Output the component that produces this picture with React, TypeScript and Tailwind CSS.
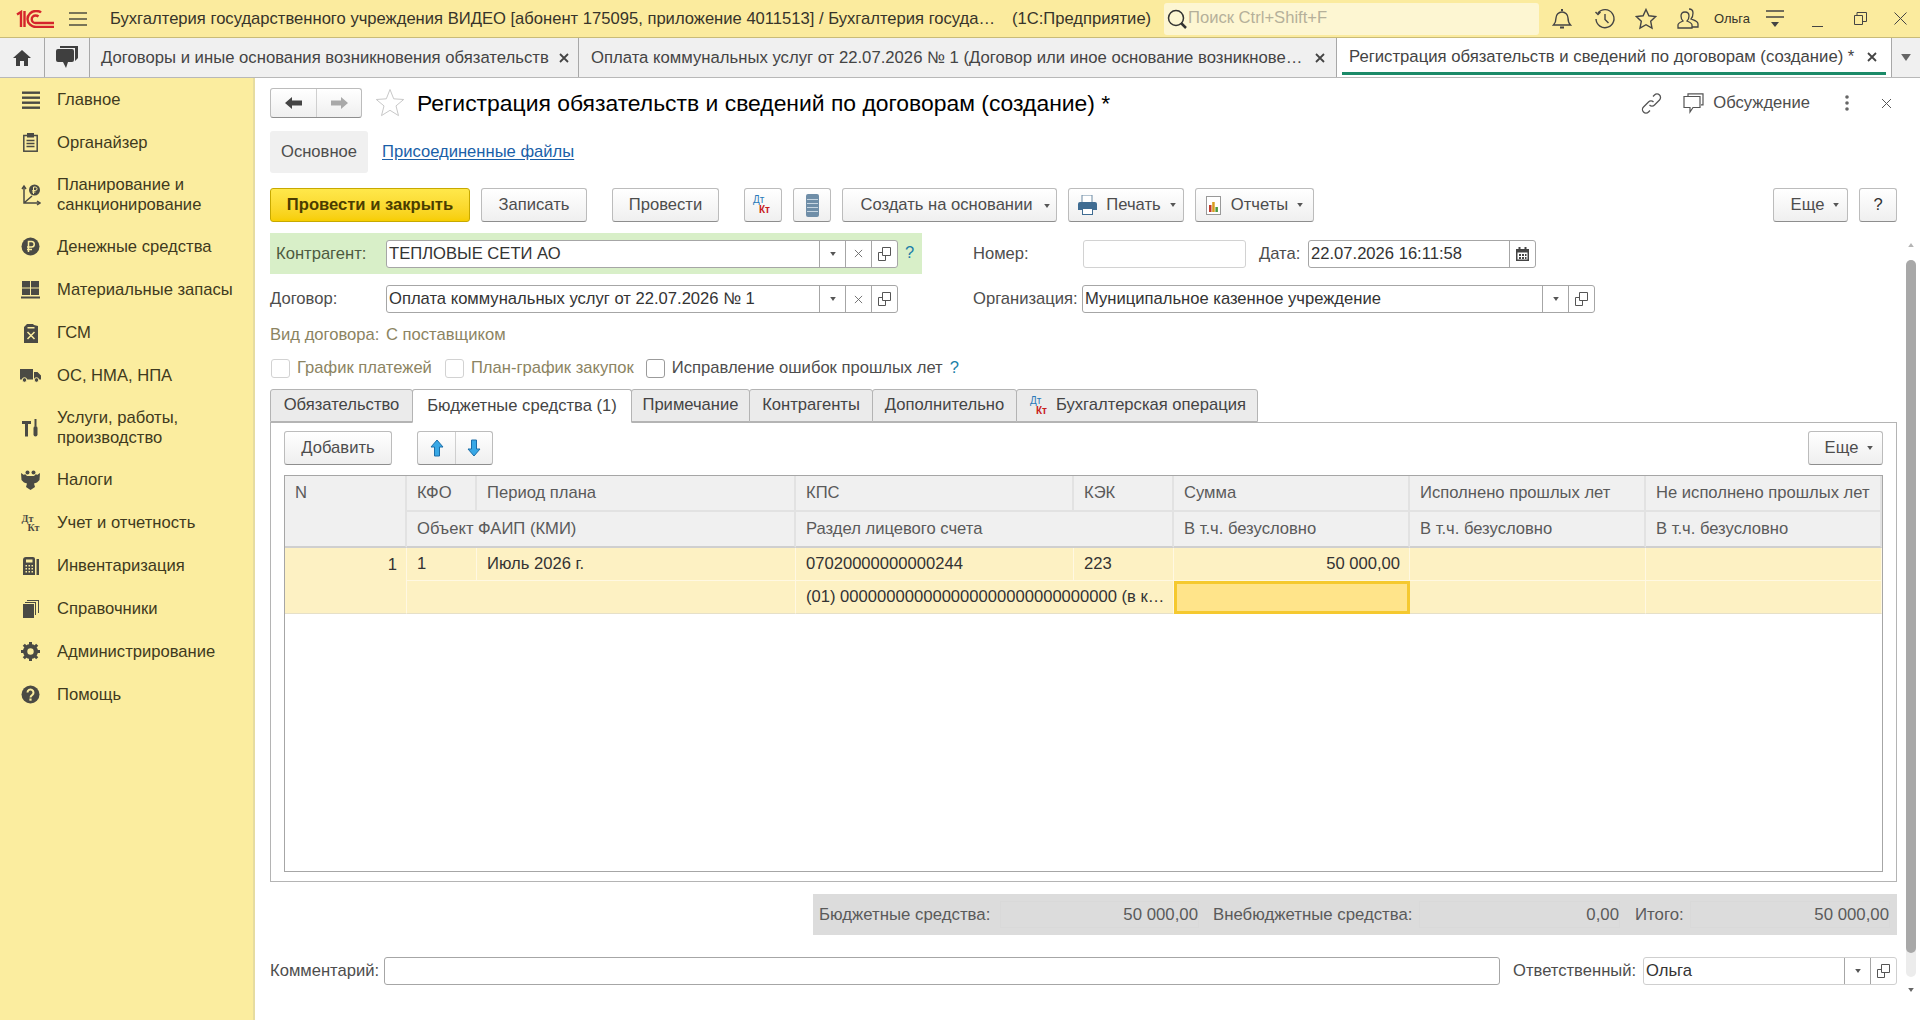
import type { ReactNode } from 'react';

const Caret = ({ className = 'text-[#555]' }: { className?: string }) => (
  <svg width="6" height="4" viewBox="0 0 7 5" className={className}>
    <path d="M0 0h7L3.5 5z" fill="currentColor" />
  </svg>
);

const Cross = ({ size = 10, width = 1.8, color = '#444' }: { size?: number; width?: number; color?: string }) => (
  <svg width={size} height={size} viewBox="0 0 10 10" stroke={color} strokeWidth={width}>
    <path d="M1 1l8 8M9 1l-8 8" />
  </svg>
);

const DtKt = () => (
  <span className="relative block w-[24px] h-[24px] font-bold leading-none">
    <span className="absolute left-[2px] top-[2px] text-[10px] font-normal text-[#2a7ab8]">Дт</span>
    <span className="absolute left-[8px] top-[12px] text-[10px] text-[#c8201a]">Кт</span>
  </span>
);

const OpenIcon = () => (
  <svg width="13" height="14" viewBox="0 0 13 14" fill="none" stroke="#555" strokeWidth="1">
    <path d="M4.5.5h8v8h-8z" />
    <path d="M4.5 5.500h-4v8h7v-5" />
  </svg>
);

const Btn = ({ children, className = '' }: { children: ReactNode; className?: string }) => (
  <div
    className={`h-[34px] shrink-0 flex items-center justify-center rounded-[3px] border border-[#bcbcbc] border-b-[#8e8e8e] bg-gradient-to-b from-white to-[#efefef] text-[#4d4d4d] text-[16.6px] ${className}`}
  >
    {children}
  </div>
);

const MenuItem = ({ icon, label, tall }: { icon: ReactNode; label: ReactNode; tall?: boolean }) => (
  <div className={`flex items-center ${tall ? 'h-[61px]' : 'h-[43px]'}`}>
    <div className="w-[57px] flex justify-center pl-[4px] shrink-0">{icon}</div>
    <div className="text-[16.6px] leading-[20px] text-[#3f3a20] whitespace-nowrap">{label}</div>
  </div>
);

const ic = '#4a4a44';

const menu: { icon: ReactNode; label: ReactNode; tall?: boolean }[] = [
  {
    label: 'Главное',
    icon: (
      <svg width="18" height="18" viewBox="0 0 18 18" fill={ic}>
        <rect y="0.5" width="18" height="2.4" />
        <rect y="5.500" width="18" height="2.4" />
        <rect y="10.500" width="18" height="2.4" />
        <rect y="15.500" width="18" height="2.4" />
      </svg>
    ),
  },
  {
    label: 'Органайзер',
    icon: (
      <svg width="15" height="19" viewBox="0 0 15 19" fill="none" stroke={ic}>
        <rect x="0.8" y="2.500" width="13.4" height="15.700" strokeWidth="1.500" />
        <rect x="4.500" y="0.5" width="6" height="3.500" fill={ic} />
        <path d="M3.500 7.500h8M3.500 10.500h8M3.500 13.500h8" strokeWidth="1.300" />
      </svg>
    ),
  },
  {
    label: (
      <>
        Планирование и
        <br />
        санкционирование
      </>
    ),
    tall: true,
    icon: (
      <svg width="20" height="24" viewBox="0 0 20 24" fill="none" stroke={ic} strokeWidth="1.500">
        <path d="M3 3v17h15M3 20l8-7" />
        <path d="M1 6l2-3 2 3M16 18l3 2-3 2" />
        <circle cx="13.500" cy="7" r="5.500" fill={ic} stroke="none" />
        <path d="M12.500 11V4h1.800a1.700 1.700 0 0 1 0 3.500h-3M11 9h3.500" stroke="#fbed9f" strokeWidth="1" />
      </svg>
    ),
  },
  {
    label: 'Денежные средства',
    icon: (
      <svg width="19" height="19" viewBox="0 0 19 19">
        <circle cx="9.5" cy="9.5" r="9" fill={ic} />
        <path d="M7.5 15V4.500h3a2.700 2.700 0 0 1 0 5.500h-4.500M6 12.500h5" fill="none" stroke="#fbed9f" strokeWidth="1.500" />
      </svg>
    ),
  },
  {
    label: 'Материальные запасы',
    icon: (
      <svg width="19" height="18" viewBox="0 0 19 18" fill={ic}>
        <rect x="1" y="0" width="8" height="6.500" />
        <rect x="10" y="0" width="8" height="6.500" />
        <rect x="1" y="7.500" width="8" height="6.500" />
        <rect x="10" y="7.500" width="8" height="6.500" />
        <rect x="0" y="15.500" width="19" height="2" />
      </svg>
    ),
  },
  {
    label: 'ГСМ',
    icon: (
      <svg width="14" height="20" viewBox="0 0 14 20">
        <path d="M0 4l3-3h6l1 1 4 1v17H0z" fill={ic} />
        <path d="M3.500 9l7 7M10.500 9l-7 7" stroke="#fbed9f" strokeWidth="1.500" />
        <rect x="3.500" y="4" width="7" height="1.500" fill="#fbed9f" />
      </svg>
    ),
  },
  {
    label: 'ОС, НМА, НПА',
    icon: (
      <svg width="21" height="15" viewBox="0 0 21 15" fill={ic}>
        <path d="M0 1h13v10.500H0zM14 4h3.500L21 7.500v4h-7z" />
        <circle cx="4.500" cy="12" r="2.300" stroke="#fbed9f" />
        <circle cx="16.500" cy="12" r="2.300" stroke="#fbed9f" />
      </svg>
    ),
  },
  {
    label: (
      <>
        Услуги, работы,
        <br />
        производство
      </>
    ),
    tall: true,
    icon: (
      <svg width="17" height="18" viewBox="0 0 17 18" fill={ic}>
        <path d="M0 2h9v3H6v12.500H3V5H0z" />
        <rect x="12.500" y="0" width="2" height="7" />
        <rect x="11.500" y="7" width="4" height="10.500" rx="2" />
      </svg>
    ),
  },
  {
    label: 'Налоги',
    icon: (
      <svg width="19" height="20" viewBox="0 0 19 20" fill={ic}>
        <circle cx="6.500" cy="2.500" r="2" />
        <circle cx="12.500" cy="2.500" r="2" />
        <path d="M0 3l3 2 1-1 2 2h7l2-2 1 1 3-2-.5 7-2.500 2.500-3 1 1 3.500-4.500 3-4.500-3 1-3.500-3-1L.5 10z" />
      </svg>
    ),
  },
  {
    label: 'Учет и отчетность',
    icon: (
      <span className="relative block w-[18px] h-[18px] leading-none font-bold text-[10px] text-[#4a4a44] [font-family:'Liberation_Serif',serif]">
        <span className="absolute left-0 top-0">Дт</span>
        <span className="absolute left-[6px] top-[9px]">Кт</span>
      </span>
    ),
  },
  {
    label: 'Инвентаризация',
    icon: (
      <svg width="16" height="18" viewBox="0 0 16 18" fill={ic}>
        <path d="M0 3a3 3 0 0 1 3-3h7a2 2 0 0 1 2 2v16H0z" />
        <rect x="13.500" y="2" width="2.500" height="16" />
        <path d="M3 2.500h6.500v3H3z" fill="#fbed9f" />
        <path d="M2.500 8H4v1.500H2.500zM5.500 8H7v1.500H5.500zM8.500 8H10v1.500H8.500zM2.500 11H4v1.500H2.500zM5.500 11H7v1.500H5.500zM8.500 11H10v1.500H8.500zM2.500 14H4v1.500H2.500zM5.500 14H7v1.500H5.500zM8.500 14H10v1.500H8.500z" fill="#fbed9f" />
      </svg>
    ),
  },
  {
    label: 'Справочники',
    icon: (
      <svg width="16" height="18" viewBox="0 0 16 18" fill={ic}>
        <rect x="0" y="4" width="11" height="14" />
        <path d="M2 2h11v13h-1V3H2zM4 0h12v13h-1V1H4z" />
      </svg>
    ),
  },
  {
    label: 'Администрирование',
    icon: (
      <svg width="19" height="19" viewBox="0 0 19 19">
        <circle cx="9.5" cy="9.5" r="5.500" fill="none" stroke={ic} strokeWidth="4" />
        <path d="M9.5 0v19M0 9.5h19M2.800 2.800l13.400 13.400M16.200 2.800L2.800 16.200" stroke={ic} strokeWidth="3" />
        <circle cx="9.5" cy="9.5" r="3.200" fill="#fbed9f" />
      </svg>
    ),
  },
  {
    label: 'Помощь',
    icon: (
      <svg width="19" height="19" viewBox="0 0 19 19">
        <circle cx="9.5" cy="9.5" r="9" fill={ic} />
        <path d="M6.500 7.500a3 3 0 1 1 4.800 2.400c-1.200.9-1.800 1.300-1.800 2.600" fill="none" stroke="#fbed9f" strokeWidth="2" />
        <rect x="8.400" y="13.500" width="2.200" height="2.200" fill="#fbed9f" />
      </svg>
    ),
  },
];

const FieldBtn = ({ children }: { children: ReactNode }) => (
  <div className="w-[26px] h-full flex items-center justify-center border-l border-[#a6a6a6] shrink-0">{children}</div>
);

const Field = ({ value, className, clear, light }: { value?: string; className: string; clear?: boolean; light?: boolean }) => (
  <div
    className={`h-[28px] flex items-center rounded-[3px] border bg-white ${light ? 'border-[#cfcfcf]' : 'border-[#a6a6a6]'} ${className}`}
  >
    <div className="flex-1 pl-[2px] pt-[1px] text-[16.6px] text-[#333] whitespace-nowrap overflow-hidden">{value}</div>
    <FieldBtn>
      <Caret />
    </FieldBtn>
    {clear && (
      <FieldBtn>
        <Cross size={9} width={1} color="#666" />
      </FieldBtn>
    )}
    <FieldBtn>
      <OpenIcon />
    </FieldBtn>
  </div>
);

const Check = ({ label, muted }: { label: string; muted?: boolean }) => (
  <div className="flex items-center">
    <div className={`w-[19px] h-[19px] rounded-[3px] border bg-white ${muted ? 'border-[#d2d2d2]' : 'border-[#9b9b9b]'}`} />
    <span className={`ml-[7px] text-[16.6px] ${muted ? 'text-[#8c8462]' : 'text-[#4d4d4d]'}`}>{label}</span>
  </div>
);

const Tab = ({ children, w, active }: { children: ReactNode; w: string; active?: boolean }) => (
  <div
    className={`${w} flex items-center justify-center text-[16.6px] text-[#444] border border-[#b4b4b4] -ml-px first:ml-0 rounded-t-[3px] whitespace-nowrap ${
      active ? 'h-[34px] bg-white border-b-white -mb-px relative' : 'h-[33px] bg-[#ebebeb]'
    }`}
  >
    {children}
  </div>
);

const Th = ({ children, className = '' }: { children?: ReactNode; className?: string }) => (
  <div className={`bg-[#f0f0f0] flex items-center pl-[10px] pr-[8px] text-[16.6px] text-[#5a5a5a] whitespace-nowrap overflow-hidden border-r-2 border-b-2 border-[#e2e2e2] ${className}`}>
    {children}
  </div>
);

const Td = ({ children, className = '' }: { children?: ReactNode; className?: string }) => (
  <div className={`bg-[#fdf1c3] flex items-center pl-[10px] pr-[9px] pt-[1px] text-[16.6px] text-[#333] whitespace-nowrap overflow-hidden border-r border-b border-[#fff8e2] ${className}`}>
    {children}
  </div>
);

export default function App() {
  return (
    <div className="w-[1920px] h-[1020px] overflow-hidden bg-white flex flex-col [font-family:'Liberation_Sans',Arial,sans-serif]">
      {/* window title */}
      <div className="h-[38px] shrink-0 bg-[#fbeb9e] border-b border-[#c9bb78] flex items-center">
        <svg width="38" height="18" viewBox="0 0 38 18" className="ml-[16px]" fill="none" stroke="#d5252b" strokeWidth="2.400">
          <path d="M1 4.500L5 2v15M8.500 1v16" />
          <path d="M25 2.500C24 1.500 22 1 20 1c-4.500 0-8.500 3.500-8.500 8s4 8 8.500 8h18" />
          <path d="M22.500 6.500c-.8-.7-2-1-3-1a3.700 3.700 0 0 0 0 7.500H38" />
        </svg>
        <svg width="18" height="14" viewBox="0 0 18 14" className="ml-[15px]" stroke="#4f4f40" strokeWidth="1.400">
          <path d="M0 1h18M0 7h18M0 13h18" />
        </svg>
        <div className="ml-[23px] pt-[1px] w-[889px] text-[16.6px] text-[#37342a] whitespace-nowrap">
          Бухгалтерия государственного учреждения ВИДЕО [абонент 175095, приложение 4011513] / Бухгалтерия госуда…
        </div>
        <div className="ml-[13px] pt-[1px] w-[142px] text-[16.6px] text-[#37342a] whitespace-nowrap">(1С:Предприятие)</div>
        <div className="ml-[10px] w-[375px] h-[32px] rounded-[3px] bg-[#fdf6d2] flex items-center pl-[2px]">
          <svg width="20" height="20" viewBox="0 0 20 20" fill="none" stroke="#333" className="ml-[1px]">
            <circle cx="9" cy="9" r="7.500" strokeWidth="1.500" />
            <path d="M14 14l5 5" strokeWidth="2.500" />
          </svg>
          <span className="ml-[1px] text-[16.6px] text-[#b5b09a]">Поиск Ctrl+Shift+F</span>
        </div>
        <svg width="20" height="22" viewBox="0 0 20 22" fill="none" stroke="#444" strokeWidth="1.400" className="ml-[13px]">
          <path d="M1.500 17c2-2 2.500-4 2.500-7a6 6 0 0 1 12 0c0 3 .5 5 2.500 7z" />
          <path d="M10 1v2M8 19.500h4" strokeWidth="2" />
        </svg>
        <svg width="22" height="22" viewBox="0 0 22 22" fill="none" stroke="#444" strokeWidth="1.400" className="ml-[22px]">
          <path d="M4 5a9 9 0 1 1-2 6M1.500 4L4 6.500 6.500 4" />
          <path d="M11 6v5.500l3.500 3.500" />
        </svg>
        <svg width="22" height="22" viewBox="0 0 22 22" fill="none" stroke="#444" strokeWidth="1.400" className="ml-[19px]">
          <path d="M11 1.500l2.900 6.300 6.800.8-5 4.700 1.300 6.800-6-3.400-6 3.400 1.300-6.800-5-4.700 6.800-.8z" />
        </svg>
        <svg width="22" height="22" viewBox="0 0 22 22" fill="none" stroke="#444" strokeWidth="1.300" className="ml-[20px]">
          <path d="M12 1c3 0 4 2 4 4 0 3-1 5-2 6 2 1 7 2 7 5v3h-6" />
          <path d="M8 4c3 0 4 2 4 4 0 2.500-1 4-2 5 2 1 5 2 5 4v3H1v-3c0-2 3-3 5-4-1-1-2-2.500-2-5 0-2 1-4 4-4z" />
        </svg>
        <span className="ml-[15px] w-[35px] text-[13px] text-[#37342a]">Ольга</span>
        <svg width="18" height="20" viewBox="0 0 18 20" className="ml-[17px]" stroke="#444" strokeWidth="1.400">
          <path d="M0 2h18M0 8h18" />
          <path d="M5 13h8l-4 5z" fill="#444" stroke="none" />
        </svg>
        <div className="ml-[28px] w-[11px] h-[15px] border-b border-[#444] mt-[2px]" />
        <svg width="13" height="13" viewBox="0 0 13 13" fill="none" stroke="#444" className="ml-[31px]">
          <path d="M.5 3.500h8v9h-8zM3 3.500V.5h9.500v9H8.500" />
        </svg>
        <svg width="13" height="13" viewBox="0 0 13 13" stroke="#444" className="ml-[27px]">
          <path d="M.5.5l12 12M12.500.5l-12 12" />
        </svg>
      </div>

      {/* open tabs */}
      <div className="h-[40px] shrink-0 bg-[#f0f0f0] border-b border-[#b8b8b8] flex items-stretch">
        <div className="w-[45px] flex items-center justify-center border-r border-[#a8a8a8]">
          <svg width="18" height="16" viewBox="0 0 18 16" fill="#3f3f3f">
            <path d="M9 0l9 8h-3v8h-4v-5H7v5H3V8H0z" />
          </svg>
        </div>
        <div className="w-[45px] flex items-center justify-center border-r border-[#a8a8a8]">
          <svg width="22" height="24" viewBox="0 0 22 24" fill="#3f3f3f">
            <path d="M4 0h18v12l-3 3V2H4z" />
            <path d="M2 3h14a2 2 0 0 1 2 2v9a2 2 0 0 1-2 2h-4l-2 6-3-6H2a2 2 0 0 1-2-2V5a2 2 0 0 1 2-2z" />
          </svg>
        </div>
        <div className="w-[489px] flex items-center border-r border-[#a8a8a8] pl-[11px] pt-[1px] text-[16.7px] text-[#444] whitespace-nowrap">
          <span>Договоры и иные основания возникновения обязательств</span>
          <span className="ml-auto mr-[9px]">
            <Cross />
          </span>
        </div>
        <div className="w-[758px] flex items-center border-r border-[#a8a8a8] pl-[12px] pt-[1px] text-[16.7px] text-[#444] whitespace-nowrap">
          <span>Оплата коммунальных услуг от 22.07.2026 № 1 (Договор или иное основание возникнове…</span>
          <span className="ml-auto mr-[11px]">
            <Cross />
          </span>
        </div>
        <div className="w-[554px] bg-white flex flex-col">
          <div className="flex-1 flex items-center pt-[4px] pl-[12px] pr-[4px] text-[16.7px] text-[#444] whitespace-nowrap">
            <span>Регистрация обязательств и сведений по договорам (создание) *</span>
            <span className="ml-auto mr-[10px]">
              <Cross />
            </span>
          </div>
          <div className="h-[3px] mx-[5px] mb-[2px] bg-[#1b8a68]" />
        </div>
        <div className="flex-1 flex items-center justify-center border-l border-[#a8a8a8]">
          <Caret className="text-[#666] w-[10px] h-[7px]" />
        </div>
      </div>

      <div className="flex-1 flex min-h-0">
        {/* sections menu */}
        <div className="w-[255px] shrink-0 bg-[#fbed9f] border-r-2 border-[#e6dca0]">
          {menu.map((m, i) => (
            <MenuItem key={i} icon={m.icon} label={m.label} tall={m.tall} />
          ))}
        </div>

        {/* form */}
        <div className="flex-1 min-w-0 flex">
          <div className="w-[1627px] ml-[15px] shrink-0 flex flex-col">
            <div className="h-[30px] mt-[10px] flex items-center">
              <div className="w-[92px] h-[30px] flex rounded-[3px] border border-[#bcbcbc] border-b-[#8e8e8e] bg-gradient-to-b from-white to-[#efefef]">
                <div className="w-[46px] flex items-center justify-center border-r border-[#cfcfcf]">
                  <svg width="17" height="12" viewBox="0 0 17 12" fill="#444">
                    <path d="M0 6l7-6v3.500h10v5H7V12z" />
                  </svg>
                </div>
                <div className="flex-1 flex items-center justify-center">
                  <svg width="17" height="12" viewBox="0 0 17 12" fill="#a9a9a9">
                    <path d="M17 6l-7-6v3.500H0v5h10V12z" />
                  </svg>
                </div>
              </div>
              <svg width="30" height="30" viewBox="0 0 30 30" fill="#fff" stroke="#c8c8c8" className="ml-[13px]">
                <path d="M15 1.500l3.700 9.300 10 .7-7.700 6.400 2.500 9.700L15 22.300l-8.500 5.300 2.500-9.700-7.700-6.400 10-.7z" />
              </svg>
              <div className="ml-[12px] text-[22.9px] text-black whitespace-nowrap">
                Регистрация обязательств и сведений по договорам (создание) *
              </div>
              <svg width="21" height="21" viewBox="0 0 21 21" fill="none" stroke="#555" strokeWidth="1.300" className="ml-auto">
                <path d="M12 3.500l1.500-1.500a3.500 3.500 0 0 1 5 5l-5 5a3.500 3.500 0 0 1-5 0" />
                <path d="M9 17.500L7.500 19a3.500 3.500 0 0 1-5-5l5-5a3.500 3.500 0 0 1 5 0" />
              </svg>
              <svg width="21" height="21" viewBox="0 0 21 21" fill="none" stroke="#555" strokeWidth="1.200" className="ml-[21px]">
                <path d="M5 3V.8h15v11h-2" />
                <path d="M1 3.500h16v11H10l-3 4.500v-4.500H1z" />
              </svg>
              <span className="ml-[9px] text-[16.6px] text-[#4d4d4d]">Обсуждение</span>
              <svg width="4" height="16" viewBox="0 0 4 16" fill="#666" className="ml-[35px]">
                <circle cx="2" cy="2" r="1.800" />
                <circle cx="2" cy="8" r="1.800" />
                <circle cx="2" cy="14" r="1.800" />
              </svg>
              <svg width="11" height="11" viewBox="0 0 11 11" stroke="#555" className="ml-[32px] mr-[5px]">
                <path d="M1 1l9 9M10 1l-9 9" />
              </svg>
            </div>

            <div className="mt-[13px] h-[42px] flex items-center text-[16.6px]">
              <div className="w-[98px] h-full pt-[1px] rounded-[3px] bg-[#f0f0f0] flex items-center justify-center text-[#4d4d4d]">Основное</div>
              <span className="ml-[14px] pt-[1px] text-[#1a5fa8] underline underline-offset-2">Присоединенные файлы</span>
            </div>

            <div className="mt-[15px] flex items-center">
              <div className="w-[200px] h-[34px] flex items-center justify-center rounded-[3px] border border-[#c7a900] bg-gradient-to-b from-[#ffe84a] to-[#f7ce00] text-[16.6px] font-bold text-[#4b3d00]">
                Провести и закрыть
              </div>
              <Btn className="w-[106px] ml-[11px]">Записать</Btn>
              <Btn className="w-[107px] ml-[25px]">Провести</Btn>
              <Btn className="w-[38px] ml-[25px]">
                <DtKt />
              </Btn>
              <Btn className="w-[38px] ml-[11px]">
                <svg width="13" height="23" viewBox="0 0 13 23">
                  <rect width="13" height="23" rx="2" fill="#6f8ea8" />
                  <path d="M1 5.500h11M1 9.500h11M1 13.500h11M1 17.500h11" stroke="#c7d6e2" />
                </svg>
              </Btn>
              <Btn className="w-[215px] ml-[11px] gap-[11px] pl-[11px]">
                Создать на основании
                <Caret className="text-[#555] mt-[1px]" />
              </Btn>
              <Btn className="w-[116px] ml-[11px] pl-[2px]">
                <svg width="19" height="20" viewBox="0 0 19 20" className="mr-[9px]">
                  <rect x="4" y="0" width="10" height="8" fill="#fff" stroke="#6b8aa3" />
                  <path d="M2 7h15a2 2 0 0 1 2 2v6h-4v-2H4v2H0V9a2 2 0 0 1 2-2z" fill="#3f6c92" />
                  <rect x="4.500" y="13.500" width="10" height="6" fill="#fff" stroke="#3f6c92" />
                </svg>
                Печать
                <Caret className="text-[#555] ml-[9px]" />
              </Btn>
              <Btn className="w-[119px] ml-[11px]">
                <svg width="15" height="19" viewBox="0 0 15 19" className="mr-[10px]">
                  <rect x=".5" y=".5" width="14" height="18" fill="#fff" stroke="#999" />
                  <rect x="3" y="9" width="2.500" height="7" fill="#c23a2c" />
                  <rect x="6.200" y="6" width="2.500" height="10" fill="#d89c1d" />
                  <rect x="9.400" y="11" width="2.500" height="5" fill="#4f9a3f" />
                </svg>
                Отчеты
                <Caret className="text-[#555] ml-[9px]" />
              </Btn>
              <Btn className="w-[75px] ml-auto gap-[9px] pl-[9px]">
                Еще
                <Caret />
              </Btn>
              <Btn className="w-[38px] ml-[11px] text-[#333]">?</Btn>
            </div>

            <div className="mt-[11px] flex">
              <div className="w-[652px] h-[41px] bg-[#d8efc8] flex items-center pl-[6px]">
                <div className="w-[110px] pt-[1px] text-[16.6px] text-[#4d5a40]">Контрагент:</div>
                <Field value="ТЕПЛОВЫЕ СЕТИ АО" clear className="w-[512px]" />
                <span className="ml-[7px] text-[16.6px] text-[#1d7fa8]">?</span>
              </div>
              <div className="ml-[51px] flex items-center">
                <div className="w-[110px] pt-[1px] text-[16.6px] text-[#4d4d4d]">Номер:</div>
                <div className="w-[163px] h-[28px] rounded-[3px] border border-[#d2d2d2] bg-white" />
                <div className="ml-[13px] w-[49px] pt-[1px] text-[16.6px] text-[#4d4d4d] whitespace-nowrap">Дата:</div>
                <div className="w-[228px] h-[28px] flex items-center rounded-[3px] border border-[#a6a6a6] bg-white">
                  <div className="flex-1 pl-[2px] pt-[1px] text-[16.6px] text-[#333]">22.07.2026 16:11:58</div>
                  <FieldBtn>
                    <svg width="13" height="14" viewBox="0 0 13 14" fill="#444">
                      <path d="M0 2h13v12H0zM1.500 5.500v7h10v-7z" fillRule="evenodd" />
                      <rect x="2.500" y="0" width="2" height="3" />
                      <rect x="8.500" y="0" width="2" height="3" />
                      <path d="M3 7h2v2H3zM6 7h2v2H6zM9 7h1.500v2H9zM3 10h2v2H3zM6 10h2v2H6zM9 10h1.500v2H9z" />
                    </svg>
                  </FieldBtn>
                </div>
              </div>
            </div>

            <div className="mt-[11px] flex items-center">
              <div className="w-[116px] pt-[1px] text-[16.6px] text-[#4d4d4d]">Договор:</div>
              <Field value="Оплата коммунальных услуг от 22.07.2026 № 1" clear className="w-[512px]" />
              <div className="ml-[75px] w-[109px] pt-[1px] text-[16.6px] text-[#4d4d4d] whitespace-nowrap">Организация:</div>
              <Field value="Муниципальное казенное учреждение" className="w-[513px]" />
            </div>

            <div className="mt-[12px] h-[20px] flex items-center text-[16.6px] text-[#8c8462]">
              <span className="w-[116px] whitespace-nowrap">Вид договора:</span>
              <span>С поставщиком</span>
            </div>

            <div className="mt-[13px] h-[20px] flex items-center">
              <div className="ml-[1px]">
                <Check label="График платежей" muted />
              </div>
              <div className="ml-[13px]">
                <Check label="План-график закупок" muted />
              </div>
              <div className="ml-[12px]">
                <Check label="Исправление ошибок прошлых лет" />
              </div>
              <span className="ml-[7px] text-[16.6px] text-[#1d7fa8]">?</span>
            </div>

            <div className="mt-[11px] flex items-start">
              <Tab w="w-[143px]">Обязательство</Tab>
              <Tab w="w-[220px]" active>
                Бюджетные средства (1)
              </Tab>
              <Tab w="w-[119px]">Примечание</Tab>
              <Tab w="w-[124px]">Контрагенты</Tab>
              <Tab w="w-[145px]">Дополнительно</Tab>
              <Tab w="w-[242px]">
                <span className="mr-[4px]">
                  <DtKt />
                </span>
                Бухгалтерская операция
              </Tab>
            </div>

            <div className="h-[460px] border border-[#b4b4b4] px-[13px] pt-[8px]">
              <div className="flex items-center">
                <Btn className="w-[108px]">Добавить</Btn>
                <div className="ml-[25px] w-[76px] h-[34px] flex rounded-[3px] border border-[#bcbcbc] border-b-[#8e8e8e] bg-gradient-to-b from-white to-[#efefef]">
                  <div className="w-[38px] flex items-center justify-center border-r border-[#cfcfcf]">
                    <svg width="14" height="18" viewBox="0 0 14 18" fill="#38a8e6" stroke="#1c6ea8">
                      <path d="M7 1l6 7H9.500v9h-5V8H1z" />
                    </svg>
                  </div>
                  <div className="flex-1 flex items-center justify-center">
                    <svg width="14" height="18" viewBox="0 0 14 18" fill="#38a8e6" stroke="#1c6ea8">
                      <path d="M7 17l6-7H9.500V1h-5v9H1z" />
                    </svg>
                  </div>
                </div>
                <Btn className="w-[75px] ml-auto gap-[9px] pl-[7px]">
                  Еще
                  <Caret />
                </Btn>
              </div>

              <div className="mt-[10px] h-[397px] border border-[#a6a6a6]">
                <div className="grid grid-cols-[122px_70px_319px_278px_100px_236px_236px_236px] grid-rows-[36px_36px_33px_33px]">
                  <Th className="row-span-2 items-start pt-[5px] border-b-[#cfcfcf]">N</Th>
                  <Th>КФО</Th>
                  <Th>Период плана</Th>
                  <Th>КПС</Th>
                  <Th>КЭК</Th>
                  <Th>Сумма</Th>
                  <Th>Исполнено прошлых лет</Th>
                  <Th>Не исполнено прошлых лет</Th>
                  <Th className="col-span-2 border-b-[#cfcfcf]">Объект ФАИП (КМИ)</Th>
                  <Th className="col-span-2 border-b-[#cfcfcf]">Раздел лицевого счета</Th>
                  <Th className="border-b-[#cfcfcf]">В т.ч. безусловно</Th>
                  <Th className="border-b-[#cfcfcf]">В т.ч. безусловно</Th>
                  <Th className="border-b-[#cfcfcf]">В т.ч. безусловно</Th>

                  <Td className="row-span-2 items-start justify-end pt-[5px] border-b-[#e6e0c8]">1</Td>
                  <Td>1</Td>
                  <Td>Июль 2026 г.</Td>
                  <Td>07020000000000244</Td>
                  <Td>223</Td>
                  <Td className="justify-end">50 000,00</Td>
                  <Td />
                  <Td />
                  <Td className="col-span-2 border-b-[#e6e0c8]" />
                  <Td className="col-span-2 border-b-[#e6e0c8]">
                    <span className="overflow-hidden">(01) 000000000000000000000000000000 (в к…</span>
                  </Td>
                  <div className="bg-[#ffe48a] border-[3px] border-[#f5c92f]" />
                  <Td className="border-b-[#e6e0c8]" />
                  <Td className="border-b-[#e6e0c8]" />
                </div>
              </div>
            </div>

            <div className="mt-[12px] ml-[543px] h-[41px] w-[1084px] bg-[#dcdcdc] flex items-center text-[16.8px] text-[#5a5a5a] whitespace-nowrap">
              <span className="ml-[6px] w-[181px]">Бюджетные средства:</span>
              <span className="w-[199px] h-[27px] flex items-center justify-end border border-[#d9d9d9]">50 000,00</span>
              <span className="ml-[14px] w-[206px]">Внебюджетные средства:</span>
              <span className="w-[201px] h-[27px] flex items-center justify-end border border-[#d9d9d9]">0,00</span>
              <span className="ml-[15px] w-[55px]">Итого:</span>
              <span className="w-[200px] h-[27px] flex items-center justify-end border border-[#d9d9d9]">50 000,00</span>
            </div>

            <div className="mt-[22px] flex items-center">
              <div className="w-[114px] text-[16.6px] text-[#4d4d4d] whitespace-nowrap">Комментарий:</div>
              <div className="w-[1116px] h-[28px] rounded-[3px] border border-[#a6a6a6] bg-white" />
              <div className="ml-[13px] w-[130px] text-[16.6px] text-[#4d4d4d] whitespace-nowrap">Ответственный:</div>
              <Field value="Ольга" className="w-[254px]" light />
            </div>
          </div>

          {/* scrollbar */}
          <div className="ml-[9px] w-[10px] relative">
            <Caret className="absolute left-[2px] top-[165px] rotate-180 text-[#b4b4b4]" />
            <div className="absolute left-0 top-[182px] bottom-[43px] w-[10px] rounded-[5px] bg-[#ececec]" />
            <div className="absolute left-0 top-[182px] bottom-[67px] w-[10px] rounded-[5px] bg-[#a8a8a8]" />
            <Caret className="absolute left-[2px] bottom-[28px] text-[#666]" />
          </div>
        </div>
      </div>
    </div>
  );
}
